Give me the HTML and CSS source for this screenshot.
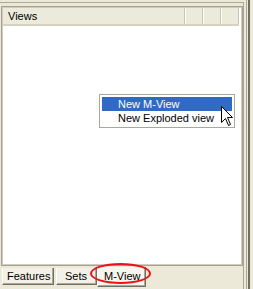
FILE: index.html
```html
<!DOCTYPE html>
<html lang="en">

<head>
	<meta charset="UTF-8">
	<title>Views</title>
	<link rel="stylesheet" href="styles.css">
</head>

<body>
	<div class="window">
		<div class="pane">
			<div class="list">
				<div class="list-head">
					<div class="col col-name">Views</div>
					<div class="col"></div>
					<div class="col"></div>
					<div class="col"></div>
				</div>
				<div class="list-body"></div>
			</div>
			<div class="tabs">
				<div class="tab tab-features">Features</div>
				<div class="tab tab-sets">Sets</div>
				<div class="tab tab-active">M-View</div>
			</div>
		</div>
		<div class="splitter"></div>
	</div>

	<!-- context menu -->
	<ul class="menu">
		<li class="menu-item selected">New M-View</li>
		<li class="menu-item">New Exploded view</li>
	</ul>

	<svg class="cursor" width="13" height="21" viewBox="0 0 13 21">
		<path d="M0.5 0.5 L0.5 16.5 L4.5 12.5 L7.5 19.5 L9.5 18.5 L6.5 11.5 L11.5 11.5 Z" fill="#fff" stroke="#000" stroke-width="1" />
	</svg>

	<div class="callout"></div>
</body>

</html>
```

FILE: styles.css
```css
body {
	margin: 0;
	width: 253px;
	height: 289px;
	overflow: hidden;
	position: relative;
	background-color: #ece9d8;
	font-family: "Liberation Sans", Arial, sans-serif;
	font-size: 11px;
	color: #000;
}

.window {
	display: flex;
	height: 289px;
}

.pane {
	width: 243px;
	margin-top: 2px;
	border-top: 1px solid #aca899;
	border-right: 1px solid #aca899;
	display: flex;
	flex-direction: column;
}

.list {
	margin: 3px 0 0 1px;
	width: 238px;
	height: 256px;
	background: white;
	border: 1px solid #a5a195;
	box-shadow: inset 0 0 0 1px #d0ccbc;
	padding: 1px 1px 1px 1px;
}

.list-head {
	display: flex;
	height: 16px;
	background-color: #ebeadb;
	border-bottom: 2px solid #d6d2c2;
	width: 236px;
}

.col {
	width: 17px;
	border-right: 1px solid #c7c5b2;
	box-shadow: inset 1px 0 0 #fff;
}

.col-name {
	width: 177px;
	padding-left: 5px;
	line-height: 16px;
	box-shadow: none;
}

.tabs {
	display: flex;
	padding-left: 2px;
	margin-top: 1px;
}

.tab {
	height: 16px;
	line-height: 16px;
	margin-top: 1px;
	background-color: #f3f1e7;
	border-left: 1px solid #fff;
	border-right: 1px solid #716f64;
	border-bottom: 1px solid #716f64;
	box-shadow: inset -1px -1px 0 #aca899;
}

.tab-features {
	width: 46px;
	padding-left: 4px;
	margin-right: 2px;
}

.tab-sets {
	width: 31px;
	padding-left: 8px;
}

.tab-active {
	width: 41px;
	padding-left: 6px;
	height: 19px;
	margin-top: 0;
	line-height: 19px;
	background-color: #f7f6ee;
}

.splitter {
	flex: 1;
	background: linear-gradient(to right, #ece9d8 0 2px, #aca899 2px 3px, #ece9d8 3px 4px, #716f64 4px 6px, #ece9d8 6px);
}

.menu {
	position: absolute;
	left: 99px;
	top: 94px;
	width: 130px;
	margin: 0;
	padding: 2px;
	list-style-type: none;
	background: white;
	border: 1px solid #aca899;
}

.menu-item {
	height: 14px;
	line-height: 14px;
	padding-left: 16px;
}

.menu-item.selected {
	background-color: #316ac5;
	color: white;
}

.cursor {
	position: absolute;
	left: 221px;
	top: 106px;
}

.callout {
	position: absolute;
	left: 90px;
	top: 263px;
	width: 57px;
	height: 17px;
	border: 2px solid #e8141b;
	border-radius: 50%;
}
```
